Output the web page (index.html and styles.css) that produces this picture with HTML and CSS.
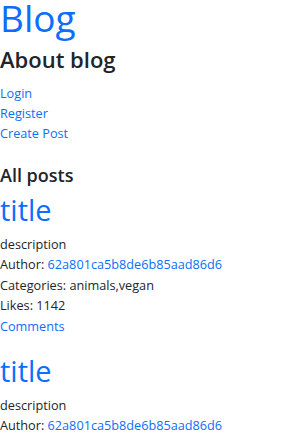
FILE: index.html
```html
<!DOCTYPE html>
<html lang="en">
<head>
    <meta charset="UTF-8">
    <meta name="viewport" content="width=device-width, initial-scale=1.0">
    <title>Blog</title>
    <link rel="stylesheet" href="styles.css">
</head>
<body>
    <header class="site-header">
        <h1 class="site-title"><a href="#">Blog</a></h1>
        <h2 class="about-title">About blog</h2>
        <nav class="nav">
            <a href="#">Login</a>
            <a href="#">Register</a>
            <a href="#">Create Post</a>
        </nav>
    </header>

    <main class="posts">
        <h3 class="posts-heading">All posts</h3>

        <article class="post">
            <h2 class="post-title"><a href="#">title</a></h2>
            <p class="post-line">description</p>
            <p class="post-line">Author: <a href="#">62a801ca5b8de6b85aad86d6</a></p>
            <p class="post-line">Categories: animals,vegan</p>
            <p class="post-line">Likes: 1142</p>
            <a class="post-line" href="#">Comments</a>
        </article>

        <article class="post">
            <h2 class="post-title"><a href="#">title</a></h2>
            <p class="post-line">description</p>
            <p class="post-line">Author: <a href="#">62a801ca5b8de6b85aad86d6</a></p>
            <p class="post-line">Categories: animals,vegan</p>
            <p class="post-line">Likes: 1142</p>
            <a class="post-line" href="#">Comments</a>
        </article>
    </main>
</body>
</html>
```

FILE: styles.css
```css
:root {
    --text-color: #212529;
    --link-color: #0d6efd;
}

* {
    box-sizing: border-box;
}

body {
    margin: 0;
    color: var(--text-color);
    font-family: 'Segoe UI', 'Open Sans', sans-serif;
    font-size: 12.7px;
    line-height: 20px;
    background: #fff;
}

a {
    color: var(--link-color);
    text-decoration: none;
}

h1, h2, h3, p {
    margin: 0;
}

.site-title {
    font-size: 37px;
    line-height: 36px;
    font-weight: 400;
}

.about-title {
    font-size: 22px;
    line-height: 30px;
    font-weight: 600;
    margin-top: 8px;
}

.nav {
    display: flex;
    flex-direction: column;
    margin-top: 9px;
}

.posts-heading {
    font-size: 18px;
    line-height: 24px;
    font-weight: 600;
    margin-top: 20px;
}

.post {
    display: flex;
    flex-direction: column;
    align-items: flex-start;
    margin-bottom: 16px;
}

.posts-heading + .post {
    margin-top: 4px;
}

.post-title {
    font-size: 29px;
    line-height: 38px;
    font-weight: 500;
    margin-bottom: 5px;
}

.post-line {
    line-height: 20.4px;
}
```
